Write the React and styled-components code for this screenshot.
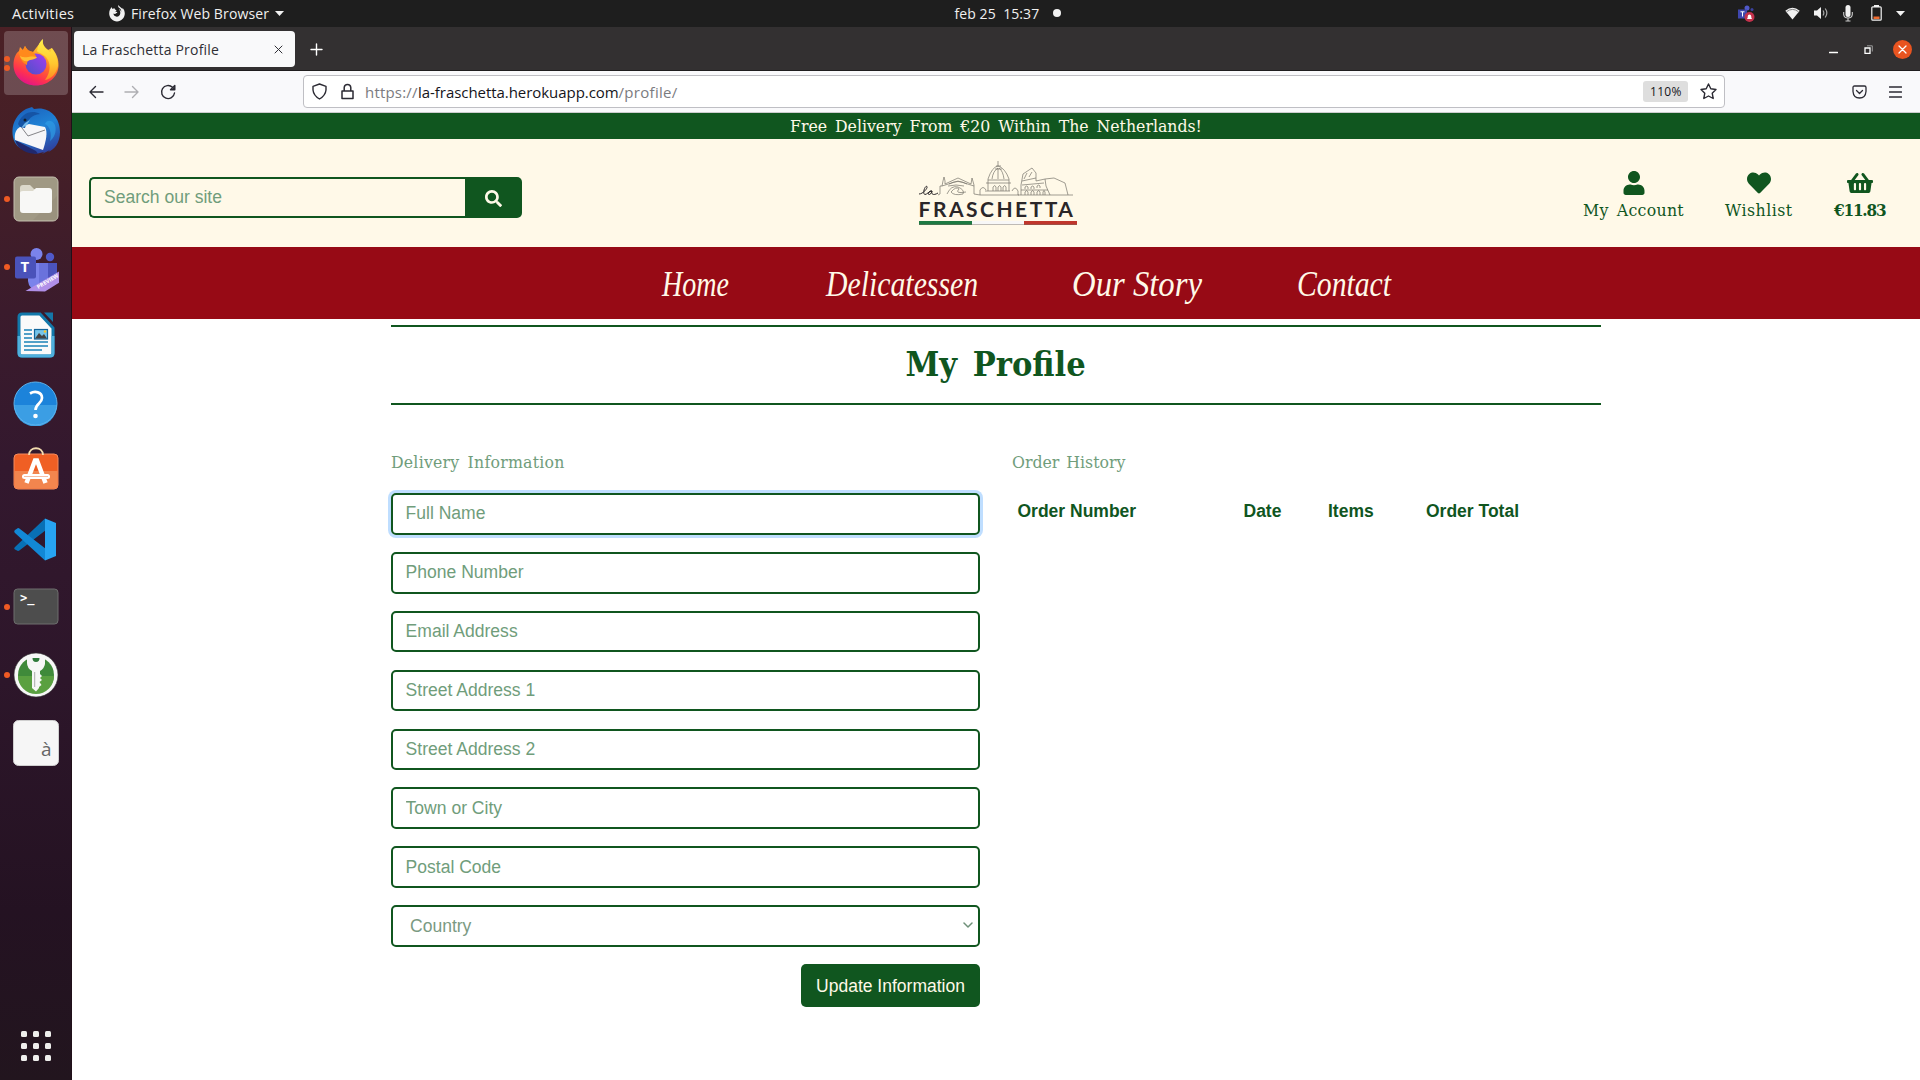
import React from "react";
import styled, { createGlobalStyle, css } from "styled-components";
import { FaSearch, FaUser, FaHeart, FaShoppingBasket } from "react-icons/fa";

const GREEN = "#10561f";
const CREAM = "#fff9e8";
const UI = `"Open Sans", "Noto Sans", sans-serif`;
const SLAB = `"DejaVu Serif Condensed", "DejaVu Serif", serif`;
const SANS = `"Liberation Sans", Arial, sans-serif`;
const SCRIPT = `"Liberation Serif", "Times New Roman", serif`;

const Global = createGlobalStyle`
  *, *::before, *::after { box-sizing: border-box; }
  html, body { margin: 0; background: #fff; }
  svg { display: block; flex: none; }
`;

const Desktop = styled.div`
  width: 1920px;
  height: 1080px;
  overflow: hidden;
  display: grid;
  grid-template: 27px 1fr / 72px 1fr;
  font-family: ${UI};
`;

/* A single line of text with a fixed advance */
const Label = styled.span`
  display: block;
  flex: none;
  white-space: pre;
  width: ${(p) => p.$w}px;
  font-size: ${(p) => p.$size}px;
  letter-spacing: ${(p) => p.$ls || 0}px;
  word-spacing: ${(p) => p.$ws || 0}px;
  color: ${(p) => p.$color || "inherit"};
`;

/* ---------- GNOME top bar ---------- */
const TopBar = styled.header`
  grid-column: 1 / -1;
  display: grid;
  grid-template-columns: 1fr auto 1fr;
  align-items: center;
  background: #1e1e1e;
  color: #f0f0f0;
`;
const TopLeft = styled.div`display: flex; align-items: center; padding-left: 12px;`;
const AppMenu = styled.div`display: flex; align-items: center; gap: 6px; margin-left: 34px;`;
const Clock = styled.div`display: flex; align-items: center; gap: 13px; margin-left: 95px; padding-bottom: 1px;`;
const NotifyDot = styled.i`width: 8px; height: 8px; border-radius: 50%; background: #f2f2f2;`;
const Tray = styled.div`display: flex; align-items: center; justify-content: flex-end; gap: 14px; padding: 0 15px 1px 0;`;
const TrayGroup = styled.div`display: flex; align-items: center; gap: 14px; margin: 0 4px 0 16px;`;

/* ---------- Dock ---------- */
const Dock = styled.nav`
  display: flex;
  flex-direction: column;
  padding: 2px 0 15px;
  border-right: 1px solid #201019;
  background: linear-gradient(#4b2025 0, #451f27 12%, #3b1b2c 27%, #33182e 42%, #2d162a 62%, #241222 84%, #22151e 100%);
`;
const Slot = styled.div`
  position: relative;
  height: 68px;
  display: grid;
  place-items: center;
`;
const Tile = styled.div`
  width: 64px;
  height: 64px;
  border-radius: 4px;
  display: grid;
  place-items: center;
  padding: ${(p) => (p.$dy > 0 ? `${p.$dy * 2}px 0 0` : `0 0 ${-(p.$dy || 0) * 2}px`)};
  background: ${(p) => (p.$active ? "rgba(255,255,255,.2)" : "none")};
`;
const Running = styled.span`
  position: absolute;
  left: 4px;
  top: 0;
  bottom: 0;
  display: flex;
  flex-direction: column;
  justify-content: center;
  gap: 3px;
`;
const RunDot = styled.i`width: 6px; height: 6px; border-radius: 50%; background: #ef5a24;`;
const Grid9 = styled.div`
  margin: auto auto 4px 21px;
  display: grid;
  grid-template-columns: repeat(3, 6px);
  gap: 6px;
`;
const GridDot = styled.i`height: 6px; border-radius: 1.5px; background: #eeeeec;`;

/* ---------- Browser chrome ---------- */
const Window = styled.main`display: flex; flex-direction: column; min-width: 0; background: #fff;`;
const TabStrip = styled.div`
  height: 44px;
  flex: none;
  display: flex;
  align-items: center;
  padding: 1px 8px 0 2px;
  background: #333031;
  border-bottom: 1px solid #1f1d1e;
  color: #fff;
`;
const Tab = styled.div`
  width: 221px;
  height: 36px;
  display: flex;
  align-items: center;
  justify-content: space-between;
  padding: 1px 12px 0 8px;
  border-radius: 4px;
  background: #f9f9fa;
  color: #2f2f35;
`;
const NewTab = styled.div`margin-left: 15px;`;
const WindowButtons = styled.div`margin-left: auto; display: flex; align-items: center;`;
const RestoreIcon = styled.svg`margin-left: 26px;`;
const CloseButton = styled.span`
  width: 19px; height: 19px; border-radius: 50%;
  display: grid; place-items: center;
  margin-left: 20px;
  background: #e95420;
`;
const Toolbar = styled.div`
  height: 42px;
  flex: none;
  display: flex;
  align-items: center;
  padding: 0 18px 0 16px;
  background: #f9f9fb;
  border-bottom: 1px solid #ccccce;
  color: #2b2a33;
`;
const NavButtons = styled.div`display: flex; gap: 20px; width: 215px; align-items: center;`;
const UrlBar = styled.div`
  width: 1422px;
  height: 33px;
  display: flex;
  align-items: center;
  gap: 12px;
  padding: 0 7px;
  border: 1px solid #bfbfc4;
  border-radius: 4px;
  background: #fff;
`;
const Url = styled.div`display: flex; margin-left: -2px; color: #7b7b80;`;
const Zoom = styled.span`
  margin-left: auto;
  width: 45px; height: 21px;
  display: flex; align-items: center; justify-content: center;
  padding-left: 1px;
  border-radius: 3px;
  background: #dedede;
  color: #15141a;
`;
const ToolRight = styled.div`margin-left: auto; display: flex; align-items: center; gap: 22px;`;

/* ---------- Shop ---------- */
const Banner = styled.div`
  height: 26px; flex: none;
  display: flex; justify-content: center;
  font-family: ${SLAB};
  line-height: 26px;
  background: ${GREEN};
  color: ${CREAM};
`;
const ShopHeader = styled.div`
  height: 108px; flex: none;
  display: grid;
  grid-template-columns: 1fr auto 1fr;
  padding: 0 35px 0 17px;
  background: ${CREAM};
  color: ${GREEN};
`;
const Search = styled.form`
  align-self: start;
  display: flex;
  width: 433px; height: 41px;
  margin-top: 38px;
`;
const field = css`
  border: 2px solid ${GREEN};
  border-radius: 5px;
  background: transparent;
  font: 17.55px/24px ${SANS};
  color: ${GREEN};
  outline: none;
  &::placeholder { color: #709d7b; opacity: 1; }
`;
const SearchInput = styled.input`
  ${field}
  width: 376px;
  padding: 0 13px 2px;
  border-right: 0;
  border-radius: 5px 0 0 5px;
`;
const SearchButton = styled.button`
  width: 57px;
  border: 0;
  border-radius: 0 5px 5px 0;
  display: grid; place-items: center;
  padding-top: 2px;
  background: ${GREEN};
  color: ${CREAM};
`;
const LogoLink = styled.a`padding-top: 21px; margin-left: 21px;`;
const Actions = styled.div`
  display: flex; justify-content: flex-end; gap: 41px;
  padding-top: 31px;
  font-family: ${SLAB};
`;
const Action = styled.a`
  display: flex; flex-direction: column; align-items: center;
  line-height: 30px;
  font-weight: ${(p) => (p.$bold ? 700 : 400)};
`;
const IconBox = styled.span`height: 25px; display: grid; place-items: center;`;
const NavBar = styled.nav`
  height: 72px; flex: none;
  display: flex;
  padding-left: 590px;
  line-height: 74px;
  font-family: ${SCRIPT};
  font-style: italic;
  background: #970a15;
  color: ${CREAM};
`;
const NavItem = styled.a`
  flex: none;
  width: ${(p) => p.$w}px;
  margin-right: ${(p) => p.$gap}px;
`;
const NavText = styled.span`
  display: block;
  white-space: nowrap;
  font-size: 36px;
  transform: scaleX(${(p) => p.$sx});
  transform-origin: 0 50%;
`;
const Page = styled.section`width: 1210px; margin: 6px 0 0 319px; color: ${GREEN};`;
const Title = styled.h1`
  height: 80px;
  margin: 0;
  display: flex; justify-content: center;
  border: solid ${GREEN};
  border-width: 2px 0;
  font-family: ${SLAB};
  font-weight: 700;
  line-height: 74px;
`;
const Columns = styled.div`display: grid; grid-template-columns: 589px 1fr; column-gap: 32px; padding-top: 43px;`;
const SubTitle = styled.h2`
  margin: 0 0 17px;
  font-family: ${SLAB};
  font-weight: 400;
  line-height: 28px;
  color: #709d7b;
`;
const Form = styled.form`display: flex; flex-direction: column; gap: 17.2px;`;
const Field = styled.input`
  ${field}
  height: 41.7px;
  padding: 0 12.6px;
  box-shadow: ${(p) => (p.$focus ? "0 0 0 3px #bfdeff" : "none")};
`;
const Select = styled.div`
  ${field}
  height: 41.7px;
  display: flex; align-items: center; justify-content: space-between;
  padding: 0 5px 0 17px;
  color: #7b9a82;
`;
const Submit = styled.button`
  align-self: flex-end;
  width: 179px; height: 43px;
  border: 0;
  border-radius: 5px;
  background: ${GREEN};
  color: ${CREAM};
  font: 17.5px ${SANS};
  white-space: nowrap;
  padding: 1px 0 0;
`;
const OrderTable = styled.div`
  display: grid;
  grid-template-columns: 226px 84.5px 98px 1fr;
  padding: 6px 5.5px;
  font: 700 17.5px/24px ${SANS};
`;

/* ---------- Drawings ---------- */
const Stroke = ({ w, h = w, d, sw = 1.3, c = "currentColor" }) => (
  <svg width={w} height={h} viewBox={`0 0 ${w} ${h}`} fill="none" stroke={c} strokeWidth={sw} strokeLinecap="round" strokeLinejoin="round">
    <path d={d} />
  </svg>
);
const Caret = () => <svg width="9" height="5"><path d="M0 0H9L4.500 5Z" fill="#f2f2f2" /></svg>;

const FirefoxMono = () => (
  <svg width="16" height="17" viewBox="0 0 16 17">
    <path fill="#f2f2f2" d="M9.500 0C8.800 1.400 9.400 2.300 10.400 3.100 11.800 4.200 12.400 5.500 12.200 6.900 11.900 5.600 10.900 4.600 9.900 4.300 10.700 5.300 11.500 6.600 11.300 8.300 11 10.300 9.600 11.700 7.800 11.700 5.900 11.700 4.400 10.300 4.500 8.600 5.300 9.200 6.300 9.100 7 8.500 7.500 8 8.300 8.100 8.300 7.600 8.300 7 7.700 6.800 6.500 6.800 6.500 6.100 7.300 5.700 7.700 5.300 6.500 4.900 5.700 4.100 5.500 3.200 4.600 3.300 4.100 3.600 3.700 4.100 2.900 3.600 2.900 2.900 3 2.100 1.200 3.500.200 5.900.200 8.600.200 13 3.700 16.500 8 16.500S15.800 13 15.800 8.600C15.800 6.200 14.900 4 13.400 2.700L13.600 4.300C12.800 2.500 10.200 2 9.500 0Z" />
  </svg>
);
const FirefoxIcon = () => (
  <svg width="46" height="47" viewBox="0 0 46 47">
    <defs>
      <linearGradient id="ff1" x1=".8" y1="0" x2=".35" y2="1"><stop offset="0" stopColor="#fff44f" /><stop offset=".3" stopColor="#ffb42c" /><stop offset=".55" stopColor="#ff6a2b" /><stop offset=".8" stopColor="#ff3150" /><stop offset="1" stopColor="#e31587" /></linearGradient>
      <linearGradient id="ff2" x1="1" y1="0" x2="0" y2="1"><stop offset="0" stopColor="#a33df0" /><stop offset="1" stopColor="#4b51c8" /></linearGradient>
      <linearGradient id="ff3" x1="0" y1="0" x2="0" y2="1"><stop offset="0" stopColor="#fff04c" /><stop offset=".6" stopColor="#ffc72f" /><stop offset="1" stopColor="#ff8a22" /></linearGradient>
    </defs>
    <path fill="url(#ff1)" d="M30 0C29 4 31 8 35 11L39 9C43 14 46 20 45.500 27 45 38 35 46.500 23 46.500S.500 38 .500 26C.500 19 3 14 6 12L7 8 10 11 12 7 15 12 20 13 30 0Z" />
    <path fill="url(#ff3)" d="M30 0C29 4 30 8 35 11 37 14 39 13 38 9 42 13 45 19 45 27 43 35 38 40 32 41 38 33 38 24 33 18 29 14 25 14 24 12 25 6 27 2 30 0Z" />
    <circle cx="23" cy="25" r="10.500" fill="url(#ff2)" />
    <path fill="#ff8a1c" d="M6 12 10 11 12 7C14 11 17 12 20 13L23 17C24 18 21 20 16 21 14 22 14 24 14 26 9 24 6 18 6 12Z" />
    <path fill="#ffbd35" d="M7 17C12 20 17 16 24 18 23 21 17 20 15 22 12 23 8 21 7 17Z" />
  </svg>
);
const ThunderbirdIcon = () => (
  <svg width="48" height="48" viewBox="0 0 48 48">
    <defs><linearGradient id="tb" x1=".3" y1="0" x2=".7" y2="1"><stop offset="0" stopColor="#1c62bd" /><stop offset=".45" stopColor="#1f83d6" /><stop offset="1" stopColor="#2f3d9c" /></linearGradient></defs>
    <path fill="url(#tb)" d="M14 2 20 0 22 2C36-1 48 9 48 25 48 36 42 43 36 45L38 43 30 47 32 45 24 47 10 42C3 39 0 31 .500 23 1 15 5 7 14 2Z" />
    <path fill="#20286c" d="M3 33 24 44 26 47C15 47 6 43 3 33Z" />
    <path fill="#f6f6f8" d="M8 20 17 17 33 20C36 25 34 34 31 43L3 33C2 27 4 22 8 20Z" />
    <path fill="none" stroke="#77777c" strokeWidth=".9" d="M7 17 16 29 33 23" />
    <path fill="#2f9be4" d="M33 17C38 19 40 27 38 34 42 31 45 25 43 18 40 12 34 13 33 17Z" opacity=".7" />
    <path fill="#1554a6" d="M6 17C9 7 19 2 28 7 20 8 15 12 13 21L8 20Z" />
    <path fill="#70b8ec" d="M13 16 18 13 14 19 9 21Z" />
    <circle cx="13" cy="13" r="1.500" fill="#102030" />
  </svg>
);
const FilesIcon = () => (
  <svg width="46" height="46" viewBox="0 0 46 46">
    <rect x="1" y="1" width="44" height="44" rx="5" fill="#a09984" stroke="#c3beae" />
    <path d="M28 2H44V20L20 44H44V2Z" fill="#8f8874" opacity=".35" />
    <path d="M7 12Q7 9 10 9H17L21 13H30V22H7Z" fill="#dcd9cb" />
    <path d="M7 17Q7 15 10 15H20L23 12H36Q39 12 39 15V34Q39 37 36 37H10Q7 37 7 34Z" fill="#f8f8f6" />
  </svg>
);
const IconWord = styled.span`
  position: absolute;
  left: ${(p) => p.$x}px;
  top: ${(p) => p.$y}px;
  font: ${(p) => p.$weight || 700} ${(p) => p.$size}px/1 ${(p) => p.$family || UI};
  color: ${(p) => p.$color || "#fff"};
  transform: rotate(${(p) => p.$rot || 0}deg);
`;
const TeamsIcon = () => (
  <>
    <svg width="46" height="44" viewBox="0 0 46 44">
      <circle cx="37" cy="9" r="4.200" fill="#5059c9" /><circle cx="23.500" cy="6" r="6" fill="#7b83eb" />
      <path d="M33 15H44V32Q39 36 33 32Z" fill="#4b53bc" /><path d="M15 15H35V33Q33 42 25 42 16 42 15 33Z" fill="#7b83eb" />
      <path d="M26 15H35V36H26Z" fill="#6a72dc" />
      <rect x="2" y="8.500" width="21" height="22" rx="2" fill="#4a52ba" />
      <path d="M12.500 43 47 23V34L32 43.500Z" fill="#b08fe8" />
    </svg>
    <IconWord $x={20.500} $y={26} $size={15}>T</IconWord>
    <IconWord $x={36} $y={46} $size={5.500} $rot={-31}>PREVIEW</IconWord>
  </>
);
const WriterIcon = () => (
  <svg width="38" height="46" viewBox="0 0 38 46">
    <path d="M5 2H23L36 16V41Q36 44 33 44H5Q2 44 2 41V5Q2 2 5 2Z" fill="#fafafa" stroke="#1278aa" strokeWidth="3" />
    <path d="M2 24V41Q2 44 5 44H33Q36 44 36 41V24" fill="none" stroke="#4fb0dd" strokeWidth="3" />
    <path d="M27 .500H36V10Z" fill="#1577a8" />
    <path d="M7 18H15M7 22H15M7 26H15M7 30H31M7 34H31M7 38H25" stroke="#1b82b8" strokeWidth="1.600" />
    <rect x="17.500" y="17.500" width="13" height="9.500" fill="#75c5ea" stroke="#12659a" strokeWidth="1.200" /><path d="M18 26.500 22 21 25 24 27 22 30 26.500Z" fill="#444" /><circle cx="28" cy="19.500" r="1.300" fill="#f7c52c" />
  </svg>
);
const HelpIcon = () => (
  <svg width="45" height="45" viewBox="0 0 45 45">
    <circle cx="22.500" cy="22.500" r="21.500" fill="#1c83da" /><path d="M1 24H44A21.500 21.500 0 0 1 1 24Z" fill="#3b9ee4" /><circle cx="22.500" cy="22.500" r="21.500" fill="none" stroke="#5cb2ec" />
    <path d="M17 12.500C22 9.500 29 11 29 17 29 22.500 22.500 22.500 22.500 29" fill="none" stroke="#fff" strokeWidth="2.700" /><circle cx="22.500" cy="35" r="2.300" fill="#fff" />
  </svg>
);
const SoftwareIcon = () => (
  <svg width="46" height="44" viewBox="0 0 46 44">
    <rect x="1" y="8" width="44" height="35" rx="4" fill="#f05f24" stroke="#f58a5c" /><path d="M1.500 25H44.500V39Q44.500 42.500 41 42.500H5Q1.500 42.500 1.500 39Z" fill="#f2854e" />
    <path d="M16 9C16 0 30 0 30 9" fill="none" stroke="#f3dcae" strokeWidth="1.800" />
    <path d="M13.500 37 22 14.500H24L32.500 37" fill="none" stroke="#fff" strokeWidth="4.500" /><rect x="9" y="28" width="28" height="5" rx="2.500" fill="#fff" /><path d="M11 30.500H35" stroke="#f3a27c" strokeWidth=".7" />
  </svg>
);
const CodeIcon = () => (
  <svg width="43" height="43" viewBox="0 0 43 43">
    <path d="M31 .500 1 29Q-.500 30.500 1 31.500L4 33Q5 33 6 32L32 12Z" fill="#0870b5" />
    <path d="M31 42.500 1 15Q-.500 13.500 1 12L4 10Q5 10 6 11L32 31Z" fill="#1288d6" />
    <path d="M31 .500 42 5V38L31 42.500Z" fill="#27a4f2" />
  </svg>
);
const TerminalIcon = () => (
  <>
    <svg width="46" height="38" viewBox="0 0 46 38"><rect x="1" y="1" width="44" height="35" rx="3.500" fill="#4d4d4d" stroke="#6e6e6e" /></svg>
    <IconWord $x={20} $y={19} $size={12} $family={`"DejaVu Sans Mono", monospace`}>&gt;_</IconWord>
  </>
);
const KeyIcon = () => (
  <svg width="46" height="46" viewBox="0 0 46 46">
    <circle cx="23" cy="23" r="22" fill="#f7f7f7" stroke="#333" strokeWidth=".6" /><circle cx="23" cy="23" r="18" fill="#3f8a3a" /><path d="M5 24H41A18 18 0 0 1 5 24Z" fill="#5aa040" />
    <path d="M14 5.500Q23 1 32 5.500V12Q31 17 27 19V22L29 24 27 26 29 28 26.500 30 28.500 33 26 35V36L23 39.500 19 36V19Q14 16 14 11Z" fill="#f7f7f7" />
    <path d="M19.500 6H26.500Q26.500 10 23 10T19.500 6Z" fill="#2f7a3b" /><path d="M21.700 20V35" stroke="#aaa" strokeWidth="1" />
  </svg>
);
const CharIcon = () => (
  <>
    <svg width="46" height="46"><rect x=".5" y=".5" width="45" height="45" rx="5" fill="#f6f6f6" stroke="#cfcfcf" /></svg>
    <IconWord $x={41} $y={31} $size={19} $weight={400} $color="#666">à</IconWord>
  </>
);
const TeamsTray = () => (
  <svg width="17" height="17" viewBox="0 0 17 17">
    <circle cx="9" cy="3" r="2.500" fill="#5059c9" /><circle cx="14" cy="4.500" r="1.500" fill="#3a429e" /><rect y="4.500" width="9" height="9" fill="#3f47ae" /><path d="M2.500 6.800H6.500M4.500 7V11.500" stroke="#fff" />
    <circle cx="11.500" cy="12" r="5" fill="#c4314b" /><path d="M9 14 9.700 12.500V11.500Q9.900 9.500 11.500 9.500T13.300 11.500V12.500L14 14Z" fill="#fff" />
  </svg>
);
const WifiIcon = () => (
  <svg width="15" height="13" viewBox="0 0 15 13"><path d="M7.500 12.500.300 3.800Q7.500-2.500 14.700 3.800Z" fill="#f2f2f2" /><path d="M1.500 4.800Q7.500 0 13.500 4.800" stroke="#777" strokeWidth=".9" fill="none" /></svg>
);
const SpeakerIcon = () => (
  <svg width="15" height="14" viewBox="0 0 15 14"><path d="M0 4.500H3L7 1V13L3 9.500H0Z" fill="#f2f2f2" /><path d="M9 4.500Q10.700 7 9 9.500M11.200 2.500Q14.500 7 11.200 11.500" fill="none" stroke="#aaa" strokeWidth="1.200" /></svg>
);
const MicIcon = () => (
  <svg width="10" height="17" viewBox="0 0 10 17"><rect x="2.500" width="5" height="12" rx="2.500" fill="#f2f2f2" /><path d="M.700 7V9.500Q1 13 5 13T9.300 9.500V7M5 13V16M2.500 16H7.500" fill="none" stroke="#ccc" strokeWidth="1.100" /></svg>
);
const BatteryIcon = () => (
  <svg width="11" height="16" viewBox="0 0 11 16"><path d="M3 0H8V2H3Z" fill="#f2f2f2" /><rect x=".8" y="1.800" width="9.400" height="13.400" rx="1" fill="none" stroke="#f2f2f2" strokeWidth="1.200" /><path d="M2.500 11.500H8.500V14H2.500Z" fill="#ef6a2e" /></svg>
);

const LogoWrap = styled.div`width: 160px; height: 66px; display: flex; flex-direction: column;`;
const LogoTop = styled.div`display: flex; height: 37px; align-items: flex-end;`;
const LogoName = styled.div`
  height: 24px;
  padding-left: 1px;
  font: 700 21px/24px Lato, sans-serif;
  color: #2a2628;
`;
const Flag = styled.div`
  height: 4px; width: 158px; margin: 0 0 0 1px;
  background: linear-gradient(90deg, #1d7a43 33.3%, #f7f7f7 33.3% 66.6%, #c0362c 66.6%);
  border-bottom: 1px solid rgba(120, 110, 100, .45);
`;
const Skyline = () => (
  <svg width="156" height="36" viewBox="0 0 156 36" fill="none" stroke="#77746c" strokeWidth=".7">
    <path stroke="#2a2628" strokeWidth="1" d="M1 33C5 33 10 27 9 25.500 7 24 4 33 7 33.500 9 33.500 11 30 14 30 11 29 9 34 11.500 33.500 13 33.500 14 30 14 30 13 33 15 35 20 32" />
    <path d="M20 34 22 33V25H24L25 20 26 16 27 20V23L40 17 53 23 54 17 56 24V33L62 34V29Q65 24 68 29V31M24 25 40 20 56 25M31 23Q40 18 49 23M30 25Q38 23 46 25M29 33Q33 24 40 26 47 29 45 33 36 35 33 31 38 25 41 28 36 33 48 31M62 34H101M70 30V18Q74 6 80 5 87 7 91 18V30M80 0V5M78 5H83M77 8H84M70 19H91M68 22H93M69 30H92M74 18Q75 10 80 7M80 7V18M86 18Q85 10 81 7M75 30V26Q77 23 78 26V30M80 30V26Q82 23 83 26V30M85 30V26Q87 23 88 26V30M94 30Q97 24 100 30V34H155M103 34V24L105 13 114 7 118 12V20L127 18 136 17 147 22 150 34M104 20 118 17M104 24 126 22M103 29 130 29M127 18 128 25 132 34M106 18 109 12M111 16 114 11M107 34V31Q109 28 110 31V34M113 34V31Q115 28 116 31V34M119 34V31Q121 28 122 31V34M125 34V31Q126 28 127 31V34M107 28V26Q109 24 110 26V28M113 28V26Q115 24 116 26V28M119 27V25Q121 23 122 25V27" />
  </svg>
);

const dockApps = [
  { Icon: FirefoxIcon, dots: 2, active: true, dy: -1 },
  { Icon: ThunderbirdIcon, dots: 0 },
  { Icon: FilesIcon, dots: 1 },
  { Icon: TeamsIcon, dots: 1, dy: 3 },
  { Icon: WriterIcon, dots: 0 },
  { Icon: HelpIcon, dots: 0 },
  { Icon: SoftwareIcon, dots: 0, dy: -3 },
  { Icon: CodeIcon, dots: 0 },
  { Icon: TerminalIcon, dots: 1 },
  { Icon: KeyIcon, dots: 1 },
  { Icon: CharIcon, dots: 0 },
];
const navItems = [
  { text: "Home", w: 67, gap: 97, sx: 0.779 },
  { text: "Delicatessen", w: 152, gap: 94, sx: 0.827 },
  { text: "Our Story", w: 130, gap: 95, sx: 0.909 },
  { text: "Contact", w: 94, gap: 0, sx: 0.825 },
];
const fields = ["Full Name", "Phone Number", "Email Address", "Street Address 1", "Street Address 2", "Town or City", "Postal Code"];

export default function App() {
  return (
    <Desktop>
      <Global />
      <TopBar>
        <TopLeft>
          <Label $w={63} $size={14.5} $ls={0.25}>Activities</Label>
          <AppMenu>
            <FirefoxMono />
            <Label $w={138} $size={14} $ls={0.12}>Firefox Web Browser</Label>
            <Caret />
          </AppMenu>
        </TopLeft>
        <Clock>
          <Label $w={85} $size={14} $ls={0.08}>{"feb 25  15:37"}</Label>
          <NotifyDot />
        </Clock>
        <Tray>
          <TeamsTray />
          <TrayGroup><WifiIcon /><SpeakerIcon /><MicIcon /></TrayGroup>
          <BatteryIcon />
          <Caret />
        </Tray>
      </TopBar>
      <Dock>
        {dockApps.map(({ Icon, dots, active, dy }, i) => (
          <Slot key={i}>
            <Running>{Array.from({ length: dots }, (_, d) => <RunDot key={d} />)}</Running>
            <Tile $active={active} $dy={dy}><Icon /></Tile>
          </Slot>
        ))}
        <Grid9>{Array.from({ length: 9 }, (_, i) => <GridDot key={i} />)}</Grid9>
      </Dock>
      <Window>
        <TabStrip>
          <Tab>
            <Label $w={137} $size={14} $ls={0.2}>La Fraschetta Profile</Label>
            <Stroke w={9} d="M1 1 8 8M8 1 1 8" sw={1} />
          </Tab>
          <NewTab><Stroke w={13} d="M6.500 1V12M1 6.500H12" sw={1.400} /></NewTab>
          <WindowButtons>
            <Stroke w={9} h={11} d="M.500 8.500H8.500" />
            <RestoreIcon width="9" height="9" fill="none" stroke="#fff">
              <path d="M1 3H6V8.500H1Z" strokeWidth="1.300" />
              <path d="M3 .8H8.300V6.500" stroke="#999" />
            </RestoreIcon>
            <CloseButton><Stroke w={9} d="M1 1 8 8M8 1 1 8" c="#fff" /></CloseButton>
          </WindowButtons>
        </TabStrip>
        <Toolbar>
          <NavButtons>
            <Stroke w={16} d="M15 8H2M7.500 2.500 2 8 7.500 13.500" sw={1.400} />
            <Stroke w={16} d="M1 8H14M8.500 2.500 14 8 8.500 13.500" sw={1.400} c="#aeaeb2" />
            <Stroke w={16} d="M14.500 9A6.500 6.500 0 1 1 12.500 3.300L14.500 5.300M14.800 1.500V5.800H10.500Z" sw={1.400} />
          </NavButtons>
          <UrlBar>
            <Stroke w={17} d="M8.500 1 15 3.300V7Q14.500 12.500 8.500 16 2.500 12.500 2 7V3.300Z" sw={1.400} />
            <Stroke w={15} h={17} d="M2 8H13V15.500H2ZM4.200 8V4.500Q4.500 1.500 7.500 1.500T10.800 4.500V8" sw={1.500} />
            <Url>
              <Label $w={53} $size={15} $ls={0.2}>https://</Label>
              <Label $w={200.5} $size={15} $ls={-0.05} $color="#15141a">la-fraschetta.herokuapp.com</Label>
              <Label $w={60} $size={15} $ls={0.3}>/profile/</Label>
            </Url>
            <Zoom><Label $w={32} $size={12} $ls={0.3}>110%</Label></Zoom>
            <Stroke w={17} d="M8.500 1 10.800 5.800 16 6.500 12.200 10.200 13.200 15.500 8.500 13 3.800 15.500 4.800 10.200 1 6.500 6.200 5.800Z" sw={1.400} />
          </UrlBar>
          <ToolRight>
            <Stroke w={15} h={14} d="M2.500 1H12.500Q14 1 14 2.500V6.500Q13.500 13 7.500 13T1 6.500V2.500Q1 1 2.500 1ZM4.500 5.500 7.500 8.500 10.500 5.500" sw={1.300} />
            <Stroke w={13} h={12} d="M.500 1H12.500M.500 6H12.500M.500 11H12.500" sw={1.300} />
          </ToolRight>
        </Toolbar>
        <Banner><Label $w={412} $size={17.5} $ws={2.9}>Free Delivery From €20 Within The Netherlands!</Label></Banner>
        <ShopHeader>
          <Search>
            <SearchInput placeholder="Search our site" />
            <SearchButton type="button"><FaSearch size={17} /></SearchButton>
          </Search>
          <LogoLink>
            <LogoWrap>
              <LogoTop><Skyline /></LogoTop>
              <LogoName><Label $w={158} $size={21} $ls={2.5}>FRASCHETTA</Label></LogoName>
              <Flag />
            </LogoWrap>
          </LogoLink>
          <Actions>
            <Action><IconBox><FaUser size={24} /></IconBox><Label $w={101} $size={17.5} $ws={3} $ls={0.28}>My Account</Label></Action>
            <Action><IconBox><FaHeart size={24} /></IconBox><Label $w={68} $size={17.5} $ls={0.5}>Wishlist</Label></Action>
            <Action $bold><IconBox><FaShoppingBasket size={26} /></IconBox><Label $w={51} $size={17} $ls={-1.2}>€11.83</Label></Action>
          </Actions>
        </ShopHeader>
        <NavBar>
          {navItems.map((n) => (
            <NavItem key={n.text} $w={n.w} $gap={n.gap}><NavText $sx={n.sx}>{n.text}</NavText></NavItem>
          ))}
        </NavBar>
        <Page>
          <Title><Label $w={181} $size={34} $ws={5}>My Profile</Label></Title>
          <Columns>
            <div>
              <SubTitle><Label $w={174} $size={17.5} $ws={3} $ls={0.22}>Delivery Information</Label></SubTitle>
              <Form>
                {fields.map((f, i) => <Field key={f} placeholder={f} $focus={i === 0} />)}
                <Select>Country<Stroke w={10} h={7} d="M1 1 5 5 9 1" sw={1.500} c="#6f9079" /></Select>
                <Submit type="button">Update Information</Submit>
              </Form>
            </div>
            <div>
              <SubTitle><Label $w={113} $size={17.5} $ws={2}>Order History</Label></SubTitle>
              <OrderTable><span>Order Number</span><span>Date</span><span>Items</span><span>Order Total</span></OrderTable>
            </div>
          </Columns>
        </Page>
      </Window>
    </Desktop>
  );
}
